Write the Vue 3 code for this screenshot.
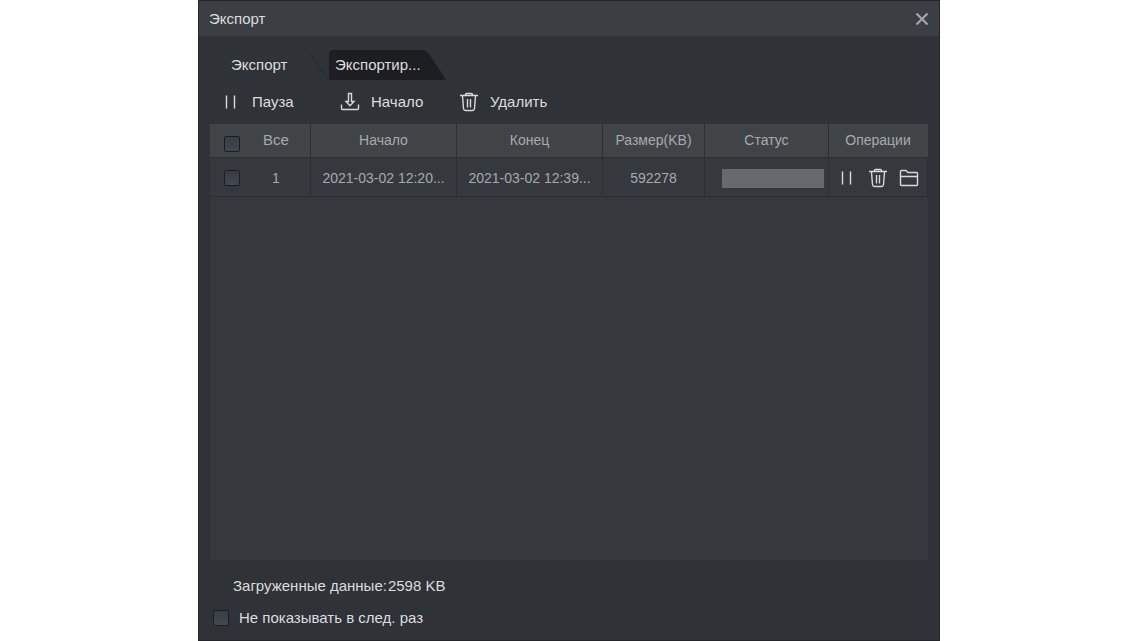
<script setup>
import { ref, reactive } from 'vue'

const tabs = ['Экспорт', 'Экспортир...']
const current = ref(0)
const rows = reactive([
  { id: 1, start: '2021-03-02 12:20...', end: '2021-03-02 12:39...', size: '592278', progress: 0, checked: false }
])
const all = ref(false)
const hide = ref(false)
</script>

<template>
  <main class="dialog">
    <header class="titlebar">
      <h1>Экспорт</h1>
      <button class="close" type="button" aria-label="Закрыть">
        <svg width="14" height="14" viewBox="0 0 14 14"><path d="M1.5 1.5L12.5 12.5M12.5 1.5L1.5 12.5" /></svg>
      </button>
    </header>

    <nav class="tabs">
      <button
        v-for="(tab, i) in tabs"
        :key="tab"
        type="button"
        class="tab"
        :class="{ active: current === i }"
        @click="current = i"
      >
        <svg class="shape" viewBox="0 0 118 30" preserveAspectRatio="none" aria-hidden="true">
          <path v-if="current === i" class="edge" d="M94 0Q98 1 101 5L118 29" />
          <path v-else class="fill" d="M0 30V4Q0 0 4 0H94Q98 0 101 4L118 30Z" />
        </svg>
        <span>{{ tab }}</span>
      </button>
    </nav>

    <div class="toolbar">
      <button class="pause" type="button">
        <svg class="icon" width="20" height="20" viewBox="0 0 20 20"><path d="M5.5 3.5V16.5M13.5 3.5V16.5" /></svg>
        Пауза
      </button>
      <button class="start" type="button">
        <svg class="icon" width="20" height="20" viewBox="0 0 20 20">
          <path d="M8.5 1.5H11.5V9.5H14L10 13.8L6 9.5H8.5ZM1.5 12.5V16.5Q1.5 17.5 2.5 17.5H17.5Q18.5 17.5 18.5 16.5V12.5" />
        </svg>
        Начало
      </button>
      <button class="delete" type="button">
        <svg class="icon" width="20" height="20" viewBox="0 0 20 20">
          <path d="M1 3.5H19M6.5 3.5V2.5Q6.5 1.5 7.5 1.5H12.5Q13.5 1.5 13.5 2.5V3.5M3.5 4L4.5 16.5Q4.7 18.5 6.5 18.5H13.5Q15.3 18.5 15.5 16.5L16.5 4M8.5 7V15.5M11.5 7V15.5" />
        </svg>
        Удалить
      </button>
    </div>

    <div class="list">
      <table>
        <colgroup>
          <col class="c-num" /><col /><col /><col class="c-size" /><col class="c-status" /><col class="c-ops" />
        </colgroup>
        <thead>
          <tr>
            <th>
              <label class="pick head"><input v-model="all" type="checkbox" /><span>Все</span></label>
            </th>
            <th>Начало</th>
            <th>Конец</th>
            <th>Размер(KB)</th>
            <th>Статус</th>
            <th>Операции</th>
          </tr>
        </thead>
        <tbody>
          <tr v-for="row in rows" :key="row.id">
            <td>
              <label class="pick"><input v-model="row.checked" type="checkbox" /><span>{{ row.id }}</span></label>
            </td>
            <td>{{ row.start }}</td>
            <td>{{ row.end }}</td>
            <td>{{ row.size }}</td>
            <td>
              <div class="bar"><div class="done" :style="{ width: row.progress + '%' }"></div></div>
            </td>
            <td>
              <div class="ops">
                <button type="button" aria-label="Пауза">
                  <svg class="icon" width="20" height="20" viewBox="0 0 20 20"><path d="M5.5 3.5V16.5M13.5 3.5V16.5" /></svg>
                </button>
                <button type="button" aria-label="Удалить">
                  <svg class="icon" width="20" height="20" viewBox="0 0 20 20">
                    <path d="M1 3.5H19M6.5 3.5V2.5Q6.5 1.5 7.5 1.5H12.5Q13.5 1.5 13.5 2.5V3.5M3.5 4L4.5 16.5Q4.7 18.5 6.5 18.5H13.5Q15.3 18.5 15.5 16.5L16.5 4M8.5 7V15.5M11.5 7V15.5" />
                  </svg>
                </button>
                <button type="button" aria-label="Открыть папку">
                  <svg class="icon" width="20" height="20" viewBox="0 0 20 20">
                    <path d="M1.5 16.5V3.5Q1.5 2.5 2.5 2.5H7L9 4.5H17.5Q18.5 4.5 18.5 5.5V16.5Q18.5 17.5 17.5 17.5H2.5Q1.5 17.5 1.5 16.5ZM1.5 8.5H18.5" />
                  </svg>
                </button>
              </div>
            </td>
          </tr>
        </tbody>
      </table>
    </div>

    <footer class="footer">
      <p class="loaded"><span>Загруженные данные:</span><span>2598 KB</span></p>
      <label class="hide"><input v-model="hide" type="checkbox" /><span>Не показывать в след. раз</span></label>
    </footer>
  </main>
</template>

<style>
body {
  background: #fff;
}
</style>

<style scoped>
.dialog {
  display: flex;
  flex-direction: column;
  box-sizing: border-box;
  min-height: 100vh;
  margin: 0 200px 0 198px;
  border: 1px solid #222529;
  background: #2f3236;
  color: #dcdddf;
  font: 15px/20px "Liberation Sans", Arial, sans-serif;
}
button {
  display: flex;
  align-items: center;
  padding: 0;
  border: 0;
  background: none;
  color: inherit;
  font: inherit;
  cursor: pointer;
}
svg {
  display: block;
  flex: none;
  fill: none;
}
.icon {
  stroke: #d8d9db;
  stroke-width: 1.4;
}
.titlebar {
  display: flex;
  align-items: center;
  justify-content: space-between;
  height: 35px;
  padding: 0 10px;
  background: #3b3e42;
}
h1 {
  margin: 0;
  font-size: 15px;
  font-weight: 400;
}
.close svg {
  stroke: #a2a5ad;
  stroke-width: 2.2;
}
.tabs {
  display: flex;
  gap: 1px;
  padding: 14px 0 0 12px;
}
.tab {
  position: relative;
  width: 117px;
  height: 30px;
  padding-left: 6px;
}
.tab.active {
  padding-left: 20px;
}
.tab span {
  position: relative;
}
.shape {
  position: absolute;
  inset: 0;
  width: 100%;
  height: 100%;
}
.fill {
  fill: #1d1e21;
}
.edge {
  stroke: #282b2e;
}
.toolbar {
  display: flex;
  padding: 12px 22px;
}
.toolbar button {
  gap: 11px;
  width: 119px;
}
.list {
  flex: 1;
  margin: 0 11px;
  background: #35383c;
}
table {
  width: 100%;
  border-collapse: separate;
  border-spacing: 0;
  table-layout: fixed;
  color: #a5aab1;
  font-size: 14px;
}
.c-num {
  width: 101px;
}
.c-size {
  width: 102px;
}
.c-status {
  width: 124px;
}
.c-ops {
  width: 99px;
}
th,
td {
  box-sizing: border-box;
  padding: 0;
  border-right: 1px solid #2c2f32;
  border-bottom: 1px solid #2c2f32;
  font-weight: 400;
  text-align: center;
  white-space: nowrap;
}
th {
  height: 34px;
  padding-bottom: 1px;
  background: #414447;
}
td {
  height: 39px;
  padding-top: 2px;
}
th:last-child {
  border-right-color: #414447;
}
input[type="checkbox"] {
  appearance: none;
  flex: none;
  box-sizing: border-box;
  width: 16px;
  height: 16px;
  margin: 0;
  border: 1px solid #1b1d20;
  border-radius: 2px;
  background: linear-gradient(#383d43, #424850);
}
input[type="checkbox"]:checked {
  background: #8d959e;
}
.pick {
  display: flex;
  align-items: center;
  padding-left: 14px;
}
.pick span {
  width: 58px;
  margin-left: 7px;
}
.head {
  font-size: 15px;
}
.head input {
  margin-top: 8px;
}
.bar {
  height: 19px;
  margin: 0 4px 0 17px;
  background: #66696d;
}
.done {
  height: 100%;
  background: #3c8ad0;
}
.ops {
  display: flex;
  justify-content: space-between;
  padding: 0 8px;
}
.footer {
  padding: 16px 14px 12px;
}
.loaded {
  display: flex;
  gap: 1px;
  margin: 0 0 12px 20px;
}
.hide {
  display: flex;
  align-items: center;
  gap: 10px;
}
</style>
